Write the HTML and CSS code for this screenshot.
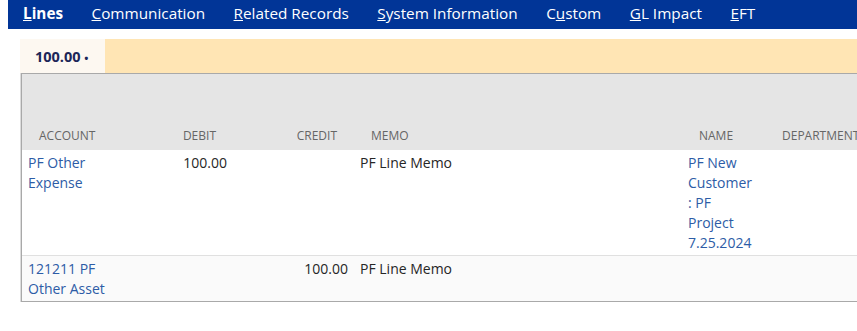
FILE: index.html
```html
<!DOCTYPE html>
<html lang="en">
<head>
  <meta charset="UTF-8" />
  <title>Lines</title>
  <link rel="stylesheet" href="styles.css">
</head>
<body>
  <nav class="tabs">
    <a class="tab active"><u>L</u>ines</a>
    <a class="tab"><u>C</u>ommunication</a>
    <a class="tab"><u>R</u>elated Records</a>
    <a class="tab"><u>S</u>ystem Information</a>
    <a class="tab">C<u>u</u>stom</a>
    <a class="tab"><u>G</u>L Impact</a>
    <a class="tab"><u>E</u>FT</a>
  </nav>

  <div class="subtabs">
    <div class="subtab">100.00 <span class="dot">&bull;</span></div>
    <div class="band"></div>
  </div>

  <div class="grid">
    <table>
      <colgroup>
        <col style="width: 128px">
        <col style="width: 83px">
        <col style="width: 121px">
        <col style="width: 328px">
        <col style="width: 83px">
        <col style="width: 140px">
      </colgroup>
      <thead>
        <tr>
          <th>Account</th>
          <th class="num">Debit</th>
          <th class="num">Credit</th>
          <th>Memo</th>
          <th>Name</th>
          <th class="dept">Department</th>
        </tr>
      </thead>
      <tbody>
        <tr>
          <td><a class="wrap acct">PF Other Expense</a></td>
          <td class="num">100.00</td>
          <td class="num"></td>
          <td>PF Line Memo</td>
          <td><a class="wrap name">PF New Customer : PF Project 7.25.2024</a></td>
          <td></td>
        </tr>
        <tr class="alt">
          <td><a class="wrap acct">121211 PF Other Asset</a></td>
          <td class="num"></td>
          <td class="num">100.00</td>
          <td>PF Line Memo</td>
          <td></td>
          <td></td>
        </tr>
      </tbody>
    </table>
  </div>
</body>
</html>
```

FILE: styles.css
```css
body {
  margin: 0;
  font-family: "Open Sans", "Liberation Sans", sans-serif;
  background: #fff;
  width: 857px;
  overflow: hidden;
}

.tabs {
  display: flex;
  gap: 28.5px;
  margin-left: 8px;
  height: 29px;
  padding: 2px 0 0 15px;
  box-sizing: border-box;
  background: #013597;
}
.tab {
  position: relative;
  color: #fff;
  font-size: 15.3px;
  line-height: 22px;
  white-space: nowrap;
}
.tab.active {
  font-weight: bold;
}
.tab.active::after {
  content: "";
  position: absolute;
  left: 50%;
  bottom: -5px;
  margin-left: -6px;
  border-left: 6px solid transparent;
  border-right: 6px solid transparent;
  border-bottom: 5px solid #fff;
}

.subtabs {
  display: flex;
  margin: 10px 0 0 20px;
  height: 34px;
}
.subtab {
  width: 85px;
  padding-left: 15px;
  box-sizing: border-box;
  background: #fdf8f1;
  color: #1c2658;
  font-size: 14.5px;
  font-weight: bold;
  line-height: 36px;
  white-space: nowrap;
}
.dot {
  font-size: 11px;
}
.band {
  flex: 1;
  background: #ffe5b4;
}

.grid {
  margin-left: 21px;
  width: 900px;
  border: 1px solid #a9a9a9;
  box-shadow: 0 0 0 1px #dcdcdc;
}
table {
  border-collapse: collapse;
  table-layout: fixed;
  width: 883px;
}
th {
  height: 76px;
  padding: 0 0 6px 17px;
  box-sizing: border-box;
  vertical-align: bottom;
  text-align: left;
  background: #e5e5e5;
  color: #666;
  font-size: 12px;
  font-weight: normal;
  line-height: 16px;
  text-transform: uppercase;
  white-space: nowrap;
}
th.num {
  text-align: right;
  padding: 0 17px 6px 0;
}
th.dept {
  padding-left: 17px;
}
td {
  padding: 3px 6px 2px;
  vertical-align: top;
  color: #262626;
  font-size: 14px;
  line-height: 20px;
}
td.num {
  text-align: right;
}
tr.alt td {
  background: #fafafa;
  border-top: 1px solid #e0e0e0;
}
a {
  color: #2d5ca6;
  text-decoration: none;
}
.wrap {
  display: block;
}
.acct {
  width: 100px;
}
.name {
  width: 68px;
}
```
